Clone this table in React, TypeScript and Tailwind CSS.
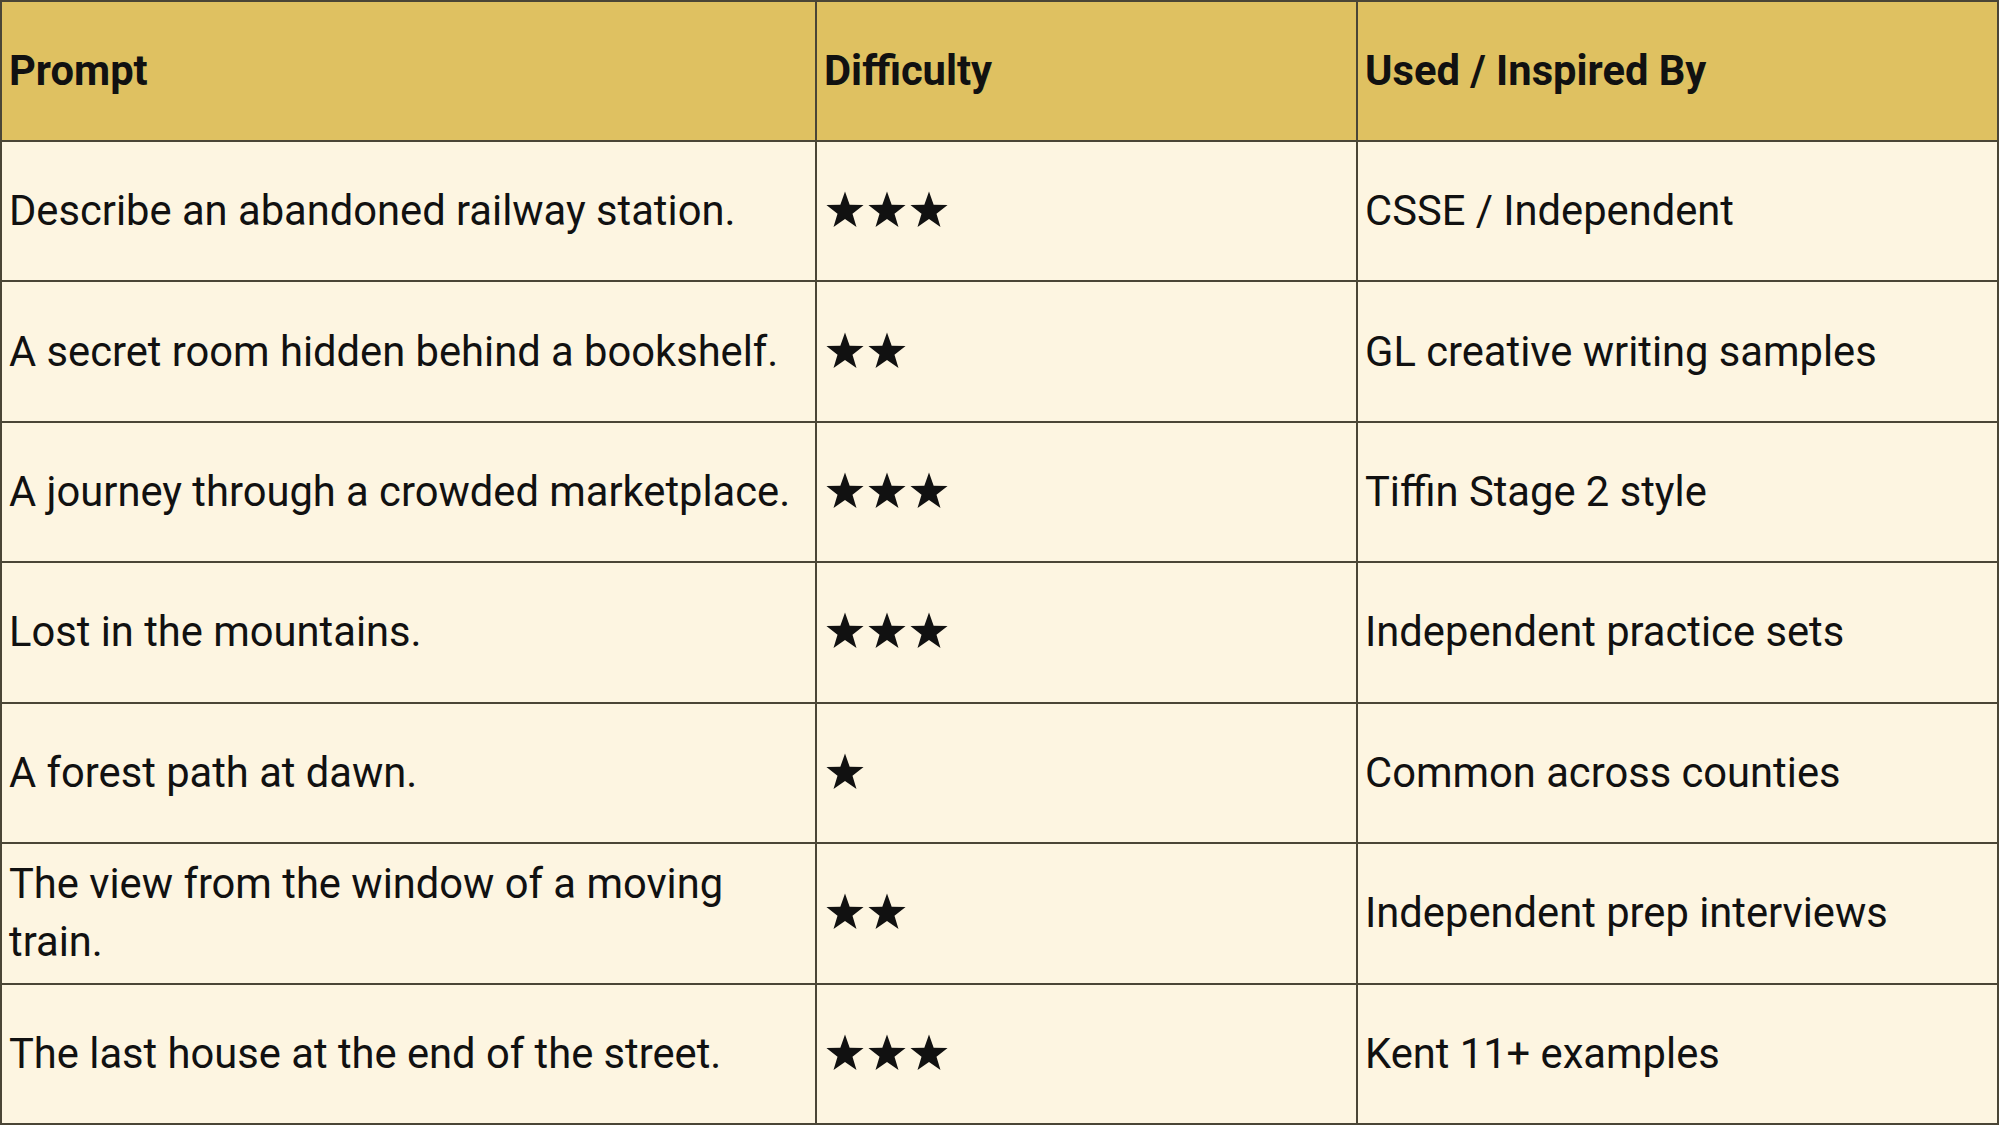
import React from "react";

const rows: [string, number, string][] = [
  ["Describe an abandoned railway station.", 3, "CSSE / Independent"],
  ["A secret room hidden behind a bookshelf.", 2, "GL creative writing samples"],
  ["A journey through a crowded marketplace.", 3, "Tiffin Stage 2 style"],
  ["Lost in the mountains.", 3, "Independent practice sets"],
  ["A forest path at dawn.", 1, "Common across counties"],
  ["The view from the window of a moving train.", 2, "Independent prep interviews"],
  ["The last house at the end of the street.", 3, "Kent 11+ examples"],
];

function Star() {
  return (
    <svg width="38" height="37" viewBox="-1.75 -1.85 3.5 3.4" className="block">
      <polygon
        fill="#111"
        points="0,-1.8 0.43,-0.59 1.712,-0.556 0.69,0.23 1.058,1.456 0,0.73 -1.058,1.456 -0.69,0.23 -1.712,-0.556 -0.43,-0.59"
      />
    </svg>
  );
}

export default function App() {
  return (
    <div
      className="w-[1999px] h-[1125px] bg-[#fdf5e1] overflow-hidden"
      style={{ fontFamily: "Roboto, 'Liberation Sans', sans-serif" }}
    >
      <table className="w-full h-[1125px] border-collapse table-fixed text-[41.7px] leading-[58px] text-[#111]">
        <colgroup>
          <col className="w-[815px]" />
          <col className="w-[541px]" />
          <col />
        </colgroup>
        <thead>
          <tr className="bg-[#dfc161] h-[140px]">
            <th className="border-2 border-[#4a4536] text-left font-bold px-[7px] align-middle">Prompt</th>
            <th className="border-2 border-[#4a4536] text-left font-bold px-[7px] align-middle">Difficulty</th>
            <th className="border-2 border-[#4a4536] text-left font-bold px-[7px] align-middle">Used / Inspired By</th>
          </tr>
        </thead>
        <tbody>
          {rows.map(([p, d, u], i) => (
            <tr key={i} className="h-[140px]">
              <td className="border-2 border-[#4a4536] px-[7px] align-middle">{p}</td>
              <td className="border-2 border-[#4a4536] pl-[9px] pr-[7px] align-middle">
                <div className="flex gap-[4px] items-center mb-[3px]">
                  {Array.from({ length: d }).map((_, k) => (
                    <Star key={k} />
                  ))}
                </div>
              </td>
              <td className="border-2 border-[#4a4536] px-[7px] align-middle">{u}</td>
            </tr>
          ))}
        </tbody>
      </table>
    </div>
  );
}
